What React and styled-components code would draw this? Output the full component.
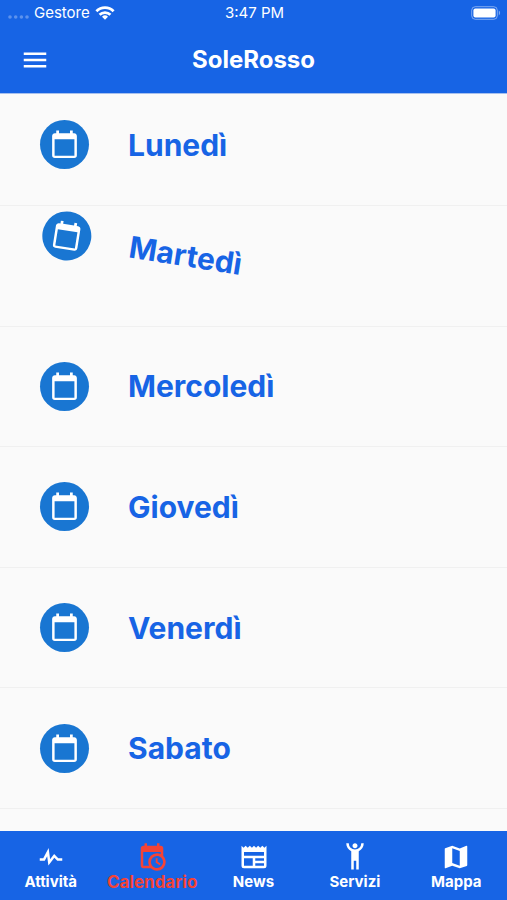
import React from "react";
import styled, { createGlobalStyle, css } from "styled-components";

const GlobalStyle = createGlobalStyle`
  * {
    box-sizing: border-box;
  }

  body {
    margin: 0;
    background-color: #fafafa;
    font-family: Inter, "Open Sans", sans-serif;
  }
`;

const Screen = styled.div`
  display: flex;
  flex-direction: column;
  min-height: 100vh;
  overflow-x: hidden;
`;

const Header = styled.header`
  background-color: #1764e5;
  color: #fff;
  border-bottom: 1px solid #a7c0ee;
`;

const StatusBar = styled.div`
  display: grid;
  grid-template-columns: 1fr auto 1fr;
  align-items: center;
  height: 26px;
  padding: 0 6px 0 8px;
  font-size: 15px;
  line-height: 18px;
`;

const Carrier = styled.div`
  display: flex;
  align-items: center;
  gap: 5px;
`;

const Battery = styled.svg`
  justify-self: end;
`;

const TitleBar = styled.div`
  display: grid;
  grid-template-columns: 1fr auto 1fr;
  align-items: center;
  height: 67px;
  padding: 0 20px;
`;

const MenuButton = styled.button`
  display: flex;
  justify-self: start;
  padding: 0;
  border: none;
  background: none;
  color: #fff;
  cursor: pointer;
`;

const Title = styled.h1`
  margin: 0;
  font-size: 24px;
  line-height: 28px;
  font-weight: 700;
`;

const DayList = styled.ul`
  flex: 1;
  display: grid;
  grid-template-rows: 112px repeat(5, minmax(100px, 1fr));
  margin: 0;
  padding: 0 0 22px;
  list-style: none;
`;

const DayRow = styled.li`
  display: flex;
  align-items: center;
  border-bottom: 1px solid #f0f0f0;

  &:first-child {
    padding-bottom: 10px;
  }
`;

const DayLink = styled.a`
  flex: 1;
  display: flex;
  align-items: center;
  gap: 39px;
  padding: 0 40px;
  color: #1764e5;
  font-size: 30px;
  line-height: 36px;
  font-weight: 700;
  text-decoration: none;

  ${(props) =>
    props.$tilted &&
    css`
      transform: rotate(9deg);
    `}
`;

const Avatar = styled.span`
  display: flex;
  align-items: center;
  justify-content: center;
  width: 49px;
  height: 49px;
  padding-top: 2px;
  border-radius: 50%;
  background-color: #1976d2;
  color: #fff;
`;

const TabBar = styled.nav`
  display: flex;
  height: 69px;
  padding-top: 11px;
  background-color: #1764e5;
`;

const Tab = styled.a`
  flex: 1;
  display: flex;
  flex-direction: column;
  align-items: center;
  color: ${(props) => (props.$active ? "#f44336" : "#fff")};
  font-size: ${(props) => (props.$active ? "17px" : "15px")};
  line-height: 20px;
  font-weight: 700;
  text-decoration: none;
`;

const paths = {
  menu: "M3,6H21V8H3V6M3,11H21V13H3V11M3,16H21V18H3V16Z",
  calendar:
    "M19.2,19.4H4.8V7.4H19.2M16,1V3H8V1H6V3H5C3.89,3 3,3.89 3,5V19A2,2 0 0,0 5,21H19A2,2 0 0,0 21,19V5C21,3.89 20.1,3 19,3H18V1",
  pulse:
    "M3,13H5.79L10.1,4.79L11.28,13.75L14.5,9.66L17.83,13H21V15H17L14.67,12.67L9.92,18.73L8.94,11.31L7,15H3V13Z",
  calendarClock:
    "M15,13H16.5V15.82L18.94,17.23L18.19,18.53L15,16.69V13M19,8H5V19H9.67C9.24,18.09 9,17.07 9,16A7,7 0 0,1 16,9C17.07,9 18.09,9.24 19,9.67V8M5,21C3.89,21 3,20.1 3,19V5C3,3.89 3.89,3 5,3H6V1H8V3H16V1H18V3H19A2,2 0 0,1 21,5V11.1C22.24,12.36 23,14.09 23,16A7,7 0 0,1 16,23C14.09,23 12.36,22.24 11.1,21H5M16,11.15A4.85,4.85 0 0,0 11.15,16C11.15,18.68 13.32,20.85 16,20.85A4.85,4.85 0 0,0 20.85,16C20.85,13.32 18.68,11.15 16,11.15Z",
  newspaper:
    "M20,11H4V8H20M20,15H13V13H20M20,19H13V17H20M11,19H4V13H11M20.33,4.67L18.67,3L17,4.67L15.33,3L13.67,4.67L12,3L10.33,4.67L8.67,3L7,4.67L5.33,3L3.67,4.67L2,3V19A2,2 0 0,0 4,21H20A2,2 0 0,0 22,19V3L20.33,4.67Z",
  human:
    "M5,1C5,3.7 6.56,6.16 9,7.32V22H11V15H13V22H15V7.31C17.44,6.16 19,3.7 19,1H17A5,5 0 0,1 12,6A5,5 0 0,1 7,1M12,1C10.89,1 10,1.89 10,3C10,4.11 10.89,5 12,5C13.11,5 14,4.11 14,3C14,1.89 13.11,1 12,1Z",
  map: "M15,19L9,16.89V5L15,7.11M20.5,3C20.44,3 20.39,3 20.34,3L15,5.1L9,3L3.36,4.9C3.15,4.97 3,5.15 3,5.38V20.5A0.5,0.5 0 0,0 3.5,21C3.55,21 3.61,21 3.66,20.97L9,18.9L15,21L20.64,19.1C20.85,19 21,18.85 21,18.62V3.5A0.5,0.5 0 0,0 20.5,3Z",
};

const Icon = ({ name, size = 30 }) => (
  <svg width={size} height={size} viewBox="0 0 24 24" fill="currentColor" aria-hidden="true">
    <path d={paths[name]} />
  </svg>
);

const days = [
  { name: "Lunedì" },
  { name: "Martedì", tilted: true },
  { name: "Mercoledì" },
  { name: "Giovedì" },
  { name: "Venerdì" },
  { name: "Sabato" },
];

const tabs = [
  { label: "Attività", icon: "pulse" },
  { label: "Calendario", icon: "calendarClock", active: true },
  { label: "News", icon: "newspaper" },
  { label: "Servizi", icon: "human" },
  { label: "Mappa", icon: "map" },
];

const App = () => {
  return (
    <Screen>
      <GlobalStyle />
      <Header>
        <StatusBar>
          <Carrier>
            <svg width="21" height="14" viewBox="0 0 21 14" fill="#fff" fillOpacity="0.3">
              <circle cx="2" cy="11" r="1.8" />
              <circle cx="7.7" cy="11" r="1.8" />
              <circle cx="13.4" cy="11" r="1.8" />
              <circle cx="19" cy="11" r="1.8" />
            </svg>
            <span>Gestore</span>
            <svg width="20" height="14" viewBox="0 0 20 14" fill="none" stroke="#fff" strokeWidth="2.8">
              <path d="M1.4 5.2a12.2 12.2 0 0 1 17.2 0" />
              <path d="M4.6 8.8a7.7 7.7 0 0 1 10.8 0" />
              <path d="M10 13.8 7 10.8a4.3 4.3 0 0 1 6 0z" fill="#fff" stroke="none" />
            </svg>
          </Carrier>
          <span>3:47 PM</span>
          <Battery width="30" height="14" viewBox="0 0 30 14" fill="none">
            <rect x="0.7" y="0.7" width="25.6" height="12.6" rx="3.6" stroke="#fff" strokeOpacity="0.45" />
            <rect x="2.4" y="2.4" width="22.2" height="9.2" rx="2" fill="#fff" />
            <path d="M27.8 4.6c1.8.8 1.8 4 0 4.8z" fill="#fff" fillOpacity="0.45" />
          </Battery>
        </StatusBar>
        <TitleBar>
          <MenuButton type="button" aria-label="Menu">
            <Icon name="menu" />
          </MenuButton>
          <Title>SoleRosso</Title>
        </TitleBar>
      </Header>
      <DayList>
        {days.map((day) => (
          <DayRow key={day.name}>
            <DayLink href="#" $tilted={day.tilted}>
              <Avatar>
                <Icon name="calendar" size={33} />
              </Avatar>
              {day.name}
            </DayLink>
          </DayRow>
        ))}
      </DayList>
      <TabBar>
        {tabs.map((tab) => (
          <Tab key={tab.label} href="#" $active={tab.active}>
            <Icon name={tab.icon} />
            {tab.label}
          </Tab>
        ))}
      </TabBar>
    </Screen>
  );
};

export default App;
